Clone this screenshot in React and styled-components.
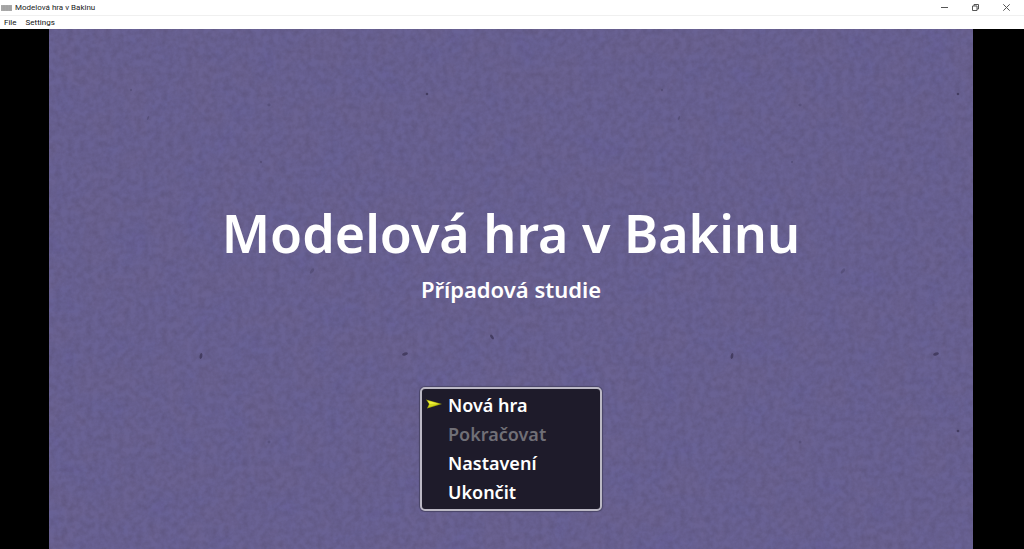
import React, { useState } from "react";
import styled, { createGlobalStyle } from "styled-components";

const GlobalStyle = createGlobalStyle`
  * {
    box-sizing: border-box;
  }
  body {
    margin: 0;
    background: #000;
  }
`;

const Window = styled.div`
  display: flex;
  flex-direction: column;
  height: 100vh;
  font-family: Roboto, sans-serif;
`;

const TitleBar = styled.header`
  display: flex;
  align-items: center;
  height: 15px;
  padding: 0 2px 0 1px;
  background: #fff;
  color: #222;
  font-size: 8px;
  line-height: 15px;
`;

const WindowName = styled.span`
  flex: 1;
  padding-left: 3px;
`;

const WindowButton = styled.button`
  display: flex;
  align-items: center;
  justify-content: center;
  width: 31px;
  height: 15px;
  padding: 0;
  border: none;
  background: none;
  color: #555;
`;

const MenuBar = styled.nav`
  display: flex;
  gap: 9px;
  height: 14px;
  padding: 0 4px;
  border-top: 1px solid #f0f0f0;
  background: #fff;
`;

const MenuBarButton = styled.button`
  padding: 0;
  border: none;
  background: none;
  color: #111;
  font-family: inherit;
  font-size: 8px;
  line-height: 12px;
`;

const Viewport = styled.main`
  display: flex;
  flex: 1;
  justify-content: center;
  min-height: 0;
  padding-right: 2px;
  background: #000;
`;

const Stage = styled.section`
  position: relative;
  display: flex;
  flex-direction: column;
  align-items: center;
  justify-content: flex-end;
  height: 100%;
  aspect-ratio: 16 / 9;
  padding-bottom: 38px;
  overflow: hidden;
  background: #6a6292;
  color: #fff;
  font-family: "Noto Sans", sans-serif;
`;

const Paper = styled.svg`
  position: absolute;
  top: 0;
  left: 0;
  width: 100%;
  height: 100%;
`;

const GameTitle = styled.h1`
  position: relative;
  margin: 0;
  font-size: 52px;
  font-weight: 600;
  line-height: 72px;
`;

const Subtitle = styled.p`
  position: relative;
  margin: 2px 0 80px;
  font-size: 22px;
  font-weight: 600;
  line-height: 36px;
`;

const GameMenu = styled.ul`
  position: relative;
  width: 182px;
  margin: 0;
  padding: 2px 4px;
  border: 2px solid #bbb8c4;
  border-radius: 5px;
  background: #1e1b2a;
  box-shadow: 0 0 1px 1px #4a4568;
  list-style: none;
`;

const MenuItem = styled.li`
  display: flex;
  align-items: center;
  height: 29px;
`;

const CursorSlot = styled.span`
  display: flex;
  width: 22px;
  padding-bottom: 3px;
`;

const MenuItemButton = styled.button`
  padding: 0;
  border: none;
  background: none;
  color: #fff;
  font-family: inherit;
  font-size: 18px;
  font-weight: 600;
  line-height: 29px;

  &:disabled {
    color: #706f76;
  }
`;

const SPECKS = [
  { x: 152, y: 327, rx: 1.4, ry: 3, turn: 10 },
  { x: 356, y: 325, rx: 3, ry: 1.6, turn: -15 },
  { x: 443, y: 308, rx: 1.4, ry: 2.8, turn: -35 },
  { x: 378, y: 65, rx: 1.3, ry: 1.3, turn: 0 },
  { x: 378, y: 402, rx: 1.4, ry: 1.2, turn: 0 },
];

const FAINT_SPECKS = [
  { x: 220, y: 76, rx: 1.6, ry: 1.4, turn: 0 },
  { x: 99, y: 89, rx: 1, ry: 2, turn: 20 },
  { x: 82, y: 61, rx: 1.2, ry: 1.2, turn: 0 },
  { x: 212, y: 133, rx: 1.2, ry: 1.2, turn: 0 },
  { x: 263, y: 242, rx: 1.5, ry: 3, turn: 35 },
  { x: 220, y: 413, rx: 1.5, ry: 1.5, turn: 0 },
];

const MENU_ITEMS = [
  { label: "Nová hra" },
  { label: "Pokračovat", disabled: true },
  { label: "Nastavení" },
  { label: "Ukončit" },
];

const Speck = ({ x, y, rx, ry, turn, opacity }) => (
  <ellipse
    cx={x}
    cy={y}
    rx={rx}
    ry={ry}
    transform={`rotate(${turn} ${x} ${y})`}
    fill="#3c3558"
    opacity={opacity}
  />
);

const PaperTexture = () => (
  <Paper aria-hidden="true">
    <defs>
      <filter id="grain" x="0" y="0" width="100%" height="100%" colorInterpolationFilters="sRGB">
        <feTurbulence type="fractalNoise" baseFrequency="0.16" numOctaves="4" seed="4" />
        <feColorMatrix values="0 0 0 0 0.29  0 0 0 0 0.25  0 0 0 0 0.37  0.5 0 0 0 -0.15" />
      </filter>
      <filter id="clouds" x="0" y="0" width="100%" height="100%" colorInterpolationFilters="sRGB">
        <feTurbulence type="fractalNoise" baseFrequency="0.03" numOctaves="3" seed="9" />
        <feColorMatrix values="0 0 0 0 0.4  0 0 0 0 0.38  0 0 0 0 0.61  0 1 0 0 -0.3" />
      </filter>
      <pattern id="specks" width="531" height="531" patternUnits="userSpaceOnUse">
        {SPECKS.map((speck) => (
          <Speck key={`${speck.x}-${speck.y}`} {...speck} opacity="0.8" />
        ))}
        {FAINT_SPECKS.map((speck) => (
          <Speck key={`${speck.x}-${speck.y}`} {...speck} opacity="0.35" />
        ))}
      </pattern>
    </defs>
    <rect width="100%" height="100%" filter="url(#clouds)" />
    <rect width="100%" height="100%" filter="url(#grain)" />
    <rect width="100%" height="100%" fill="url(#specks)" />
  </Paper>
);

const AppIcon = () => (
  <svg width="11" height="6" viewBox="0 0 11 6" aria-hidden="true">
    <rect width="11" height="6" fill="#aaa" />
    <path d="M0 2H11M0 4H11M3 0V6M6 0V6M9 0V6" stroke="#999" strokeWidth="0.5" />
  </svg>
);

const Cursor = () => (
  <svg width="16" height="10" viewBox="0 0 16 10" aria-hidden="true">
    <path d="M0 0.5L16 5L1 9.5L3 5Z" fill="#a5a80c" />
    <path d="M1.5 1.5L13 4.8L3.5 5Z" fill="#eef03a" />
    <path d="M3.5 5L13 5L2.5 8.3Z" fill="#d4d91c" />
  </svg>
);

function App() {
  const [selected, setSelected] = useState(0);

  return (
    <Window>
      <GlobalStyle />
      <TitleBar>
        <AppIcon />
        <WindowName>Modelová hra v Bakinu</WindowName>
        <WindowButton aria-label="Minimize">
          <svg width="7" height="7" viewBox="0 0 7 7">
            <path d="M0 3.5H7" stroke="currentColor" />
          </svg>
        </WindowButton>
        <WindowButton aria-label="Restore">
          <svg width="7" height="7" viewBox="0 0 7 7" fill="none" stroke="currentColor">
            <path d="M0.5 2H5V6.5H0.5Z" />
            <path d="M2 2V0.5H6.5V5H5" />
          </svg>
        </WindowButton>
        <WindowButton aria-label="Close">
          <svg width="7" height="7" viewBox="0 0 7 7">
            <path d="M0.3 0.3L6.7 6.7M6.7 0.3L0.3 6.7" stroke="currentColor" />
          </svg>
        </WindowButton>
      </TitleBar>
      <MenuBar>
        <MenuBarButton>File</MenuBarButton>
        <MenuBarButton>Settings</MenuBarButton>
      </MenuBar>
      <Viewport>
        <Stage>
          <PaperTexture />
          <GameTitle>Modelová hra v Bakinu</GameTitle>
          <Subtitle>Případová studie</Subtitle>
          <GameMenu>
            {MENU_ITEMS.map((item, index) => (
              <MenuItem key={item.label}>
                <CursorSlot>{selected === index && <Cursor />}</CursorSlot>
                <MenuItemButton
                  disabled={item.disabled}
                  onClick={() => setSelected(index)}
                >
                  {item.label}
                </MenuItemButton>
              </MenuItem>
            ))}
          </GameMenu>
        </Stage>
      </Viewport>
    </Window>
  );
}

export default App;
